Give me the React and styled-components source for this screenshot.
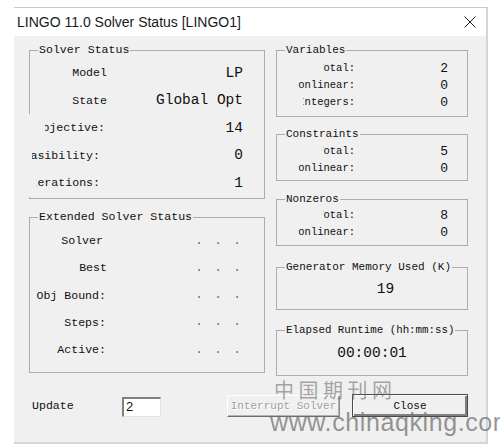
import React from 'react';
import styled, { createGlobalStyle } from 'styled-components';

const GlobalStyle = createGlobalStyle`
  body {
    margin: 0;
    background: #fff;
  }
`;

const Page = styled.div`
  position: relative;
  width: 500px;
  height: 448px;
  overflow: hidden;
  background: #fff;
`;

const Window = styled.div`
  margin: 7px 0 0 14px;
  width: 474px;
  box-sizing: border-box;
  border-top: 1px solid #c8c8c8;
  border-right: 2px solid #d2d5d9;
  border-bottom: 2px solid #d6d6d6;
`;

const TitleBar = styled.div`
  height: 28px;
  display: flex;
  align-items: center;
  justify-content: space-between;
  padding: 0 10px 0 3px;
  background: #fff;
  font-family: 'Liberation Sans', Arial, sans-serif;
  font-size: 14px;
  color: #1a1a1a;
`;

const Client = styled.div`
  height: 406px;
  box-sizing: border-box;
  padding: 14px 0 0 15px;
  background: #f0f0f0;
  font-family: 'Liberation Mono', 'Courier New', monospace;
  color: #111;
`;

const Columns = styled.div`
  display: flex;
  gap: 11px;
  align-items: flex-start;
`;

const Column = styled.div`
  width: ${p => p.$w}px;
  display: flex;
  flex-direction: column;
`;

const GroupBox = styled.div`
  box-sizing: border-box;
  height: ${p => p.$h}px;
  margin-top: ${p => p.$mt || 0}px;
  border: 1px solid #adadad;
`;

const Caption = styled.div`
  display: table;
  margin: -8px 0 0 8px;
  padding: 0 1px;
  height: 14px;
  line-height: 14px;
  background: #f0f0f0;
  font-size: ${p => p.$size || 11.6}px;
  white-space: nowrap;
`;

const Rows = styled.div`
  padding-top: ${p => p.$pt || 0}px;
`;

const Row = styled.div`
  display: flex;
  align-items: center;
  height: ${p => p.$h}px;
`;

const LabelCell = styled.div`
  flex: none;
  box-sizing: border-box;
  width: ${p => p.$w}px;
  margin-left: ${p => p.$ml || 0}px;
  padding-right: ${p => p.$pr || 0}px;
  height: 100%;
  display: flex;
  align-items: center;
  justify-content: flex-end;
  background: #f0f0f0;
  font-size: ${p => p.$size || 11.6}px;
`;

const Clip = styled.span`
  display: flex;
  justify-content: flex-end;
  overflow: hidden;
  white-space: nowrap;
  max-width: ${p => (p.$clip ? `${p.$clip}px` : 'none')};
`;

const Value = styled.div`
  flex: 1;
  text-align: right;
  padding-right: ${p => p.$pr}px;
  font-size: ${p => p.$size}px;
  white-space: nowrap;
`;

const Dots = styled.div`
  flex: 1;
  text-align: right;
  padding-right: 21px;
  font-size: 12px;
  letter-spacing: 2.3px;
  color: #6a6a6a;
`;

const BigValue = styled.div`
  height: ${p => p.$h}px;
  line-height: ${p => p.$h}px;
  text-align: center;
  padding-left: ${p => p.$shift || 0}px;
  font-size: 14.5px;
`;

const BottomBar = styled.div`
  display: flex;
  align-items: center;
  height: 23px;
  margin-top: 18px;
`;

const UpdateLabel = styled.span`
  width: 90px;
  margin-left: 3px;
  font-size: 11.6px;
`;

const NumberInput = styled.div`
  box-sizing: border-box;
  width: 39px;
  height: 20px;
  margin-top: 3px;
  padding-left: 2px;
  background: #fff;
  border-top: 2px solid #808080;
  border-left: 2px solid #808080;
  border-right: 1px solid #e3e3e3;
  border-bottom: 1px solid #e3e3e3;
  font-family: 'Liberation Sans', Arial, sans-serif;
  font-size: 13px;
  line-height: 16px;
`;

const Button = styled.div`
  box-sizing: border-box;
  width: ${p => p.$w}px;
  height: ${p => p.$h}px;
  margin-left: ${p => p.$ml}px;
  display: flex;
  align-items: center;
  justify-content: center;
  white-space: nowrap;
  font-size: 11px;
  background: #f0f0f0;
  border: 1px solid ${p => (p.$default ? '#4a4a4a' : '#ffffff')};
  border-right-color: ${p => (p.$default ? '#4a4a4a' : '#8a8a8a')};
  border-bottom-color: ${p => (p.$default ? '#4a4a4a' : '#6c6c6c')};
  box-shadow: ${p =>
    p.$default
      ? 'inset 1px 1px 0 #fff, inset -2px -2px 0 #808080'
      : 'inset -1px -1px 0 #b4b4b4'};
  color: ${p => (p.$disabled ? '#a0a0a0' : '#111')};
  text-shadow: ${p => (p.$disabled ? '1px 1px 0 #fff' : 'none')};
`;

const CnMark = styled.div`
  position: absolute;
  left: 274px;
  top: 375px;
  font-family: 'Noto Sans CJK SC', sans-serif;
  font-size: 20px;
  letter-spacing: 4.5px;
  color: rgba(110, 110, 110, 0.6);
  pointer-events: none;
`;

const UrlMark = styled.div`
  position: absolute;
  left: 270px;
  top: 407px;
  font-family: 'Liberation Sans', Arial, sans-serif;
  font-size: 25px;
  line-height: 30px;
  letter-spacing: 0.6px;
  color: rgba(110, 110, 110, 0.72);
  white-space: nowrap;
  pointer-events: none;
`;

const solverRows = [
  { label: 'Model', value: 'LP' },
  { label: 'State', value: 'Global Opt' },
  { label: 'Objective:', value: '14', cover: true, pr: 2, clip: 60 },
  { label: 'Infeasibility:', value: '0', cover: true, pr: 7, clip: 68 },
  { label: 'Iterations:', value: '1', cover: true, pr: 7, clip: 64 },
];

const extendedRows = [
  { label: 'Solver', pr: 4 },
  { label: 'Best', pr: 0 },
  { label: 'Obj Bound:', pr: 1 },
  { label: 'Steps:', pr: 1 },
  { label: 'Active:', pr: 1 },
];

const countBoxes = [
  {
    title: 'Variables', h: 67, mt: 0, pt: 2.5,
    rows: [['Total:', 2, 32], ['Nonlinear:', 0, 57], ['Integers:', 0, 52]],
  },
  {
    title: 'Constraints', h: 47, mt: 17, pt: 1.5,
    rows: [['Total:', 5, 32], ['Nonlinear:', 0, 57]],
  },
  {
    title: 'Nonzeros', h: 47, mt: 18, pt: 0.5,
    rows: [['Total:', 8, 32], ['Nonlinear:', 0, 57]],
  },
];

function CloseIcon() {
  return (
    <svg width="12" height="12" viewBox="0 0 12 12">
      <path d="M0.5 0.5 L11.5 11.5 M11.5 0.5 L0.5 11.5" stroke="#222" strokeWidth="1" />
    </svg>
  );
}

export default function App() {
  return (
    <Page>
      <GlobalStyle />
      <Window>
        <TitleBar>
          <span>LINGO 11.0 Solver Status [LINGO1]</span>
          <CloseIcon />
        </TitleBar>
        <Client>
          <Columns>
            <Column $w={236}>
              <GroupBox $h={149}>
                <Caption>Solver Status</Caption>
                <Rows $pt={2}>
                  {solverRows.map(r => (
                    <Row key={r.label} $h={27.5}>
                      <LabelCell $w={r.cover ? 93 : 77} $ml={r.cover ? -16 : 0} $pr={r.pr}>
                        <Clip $clip={r.clip}>{r.label}</Clip>
                      </LabelCell>
                      <Value $pr={21} $size={14.5}>{r.value}</Value>
                    </Row>
                  ))}
                </Rows>
              </GroupBox>
              <GroupBox $h={156} $mt={18}>
                <Caption>Extended Solver Status</Caption>
                <Rows $pt={3}>
                  {extendedRows.map(r => (
                    <Row key={r.label} $h={27.25}>
                      <LabelCell $w={77} $pr={r.pr}>
                        <Clip>{r.label}</Clip>
                      </LabelCell>
                      <Dots>. . .</Dots>
                    </Row>
                  ))}
                </Rows>
              </GroupBox>
            </Column>

            <Column $w={192}>
              {countBoxes.map(box => (
                <GroupBox key={box.title} $h={box.h} $mt={box.mt}>
                  <Caption $size={11}>{box.title}</Caption>
                  <Rows $pt={box.pt}>
                    {box.rows.map(([label, value, clip]) => (
                      <Row key={label} $h={17}>
                        <LabelCell $w={78} $size={10.5}>
                          <Clip $clip={clip}>{label}</Clip>
                        </LabelCell>
                        <Value $pr={19} $size={13}>{value}</Value>
                      </Row>
                    ))}
                  </Rows>
                </GroupBox>
              ))}
              <GroupBox $h={43} $mt={21}>
                <Caption $size={11}>Generator Memory Used (K)</Caption>
                <BigValue $h={30} $shift={27}>19</BigValue>
              </GroupBox>
              <GroupBox $h={46} $mt={20}>
                <Caption $size={10.8}>Elapsed Runtime (hh:mm:ss)</Caption>
                <BigValue $h={32}>00:00:01</BigValue>
              </GroupBox>
            </Column>
          </Columns>

          <BottomBar>
            <UpdateLabel>Update</UpdateLabel>
            <NumberInput>2</NumberInput>
            <Button $w={113} $h={22} $ml={66} $disabled>Interrupt Solver</Button>
            <Button $w={116} $h={23} $ml={12} $default>Close</Button>
          </BottomBar>
        </Client>
      </Window>
      <CnMark>中国期刊网</CnMark>
      <UrlMark>www.chinaqking.com</UrlMark>
    </Page>
  );
}
